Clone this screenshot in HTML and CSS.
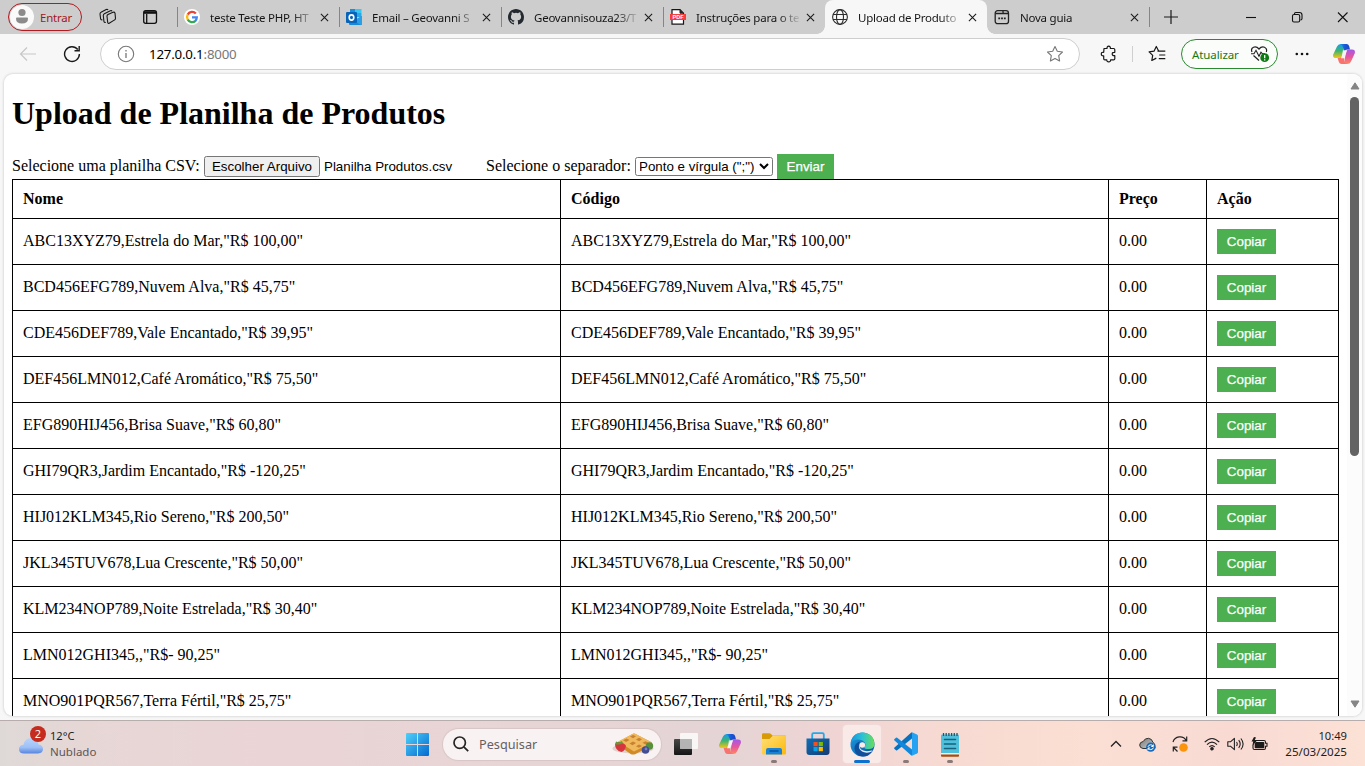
FILE: index.html
```html
<!DOCTYPE html>
<html lang="pt-BR">
<head>
<meta charset="utf-8">
<title>Upload de Produtos</title>
<link rel="stylesheet" href="styles.css">
</head>
<body>
<svg class="defs" aria-hidden="true">
  <defs>
    <linearGradient id="cpTop" x1="0" y1="0" x2="1" y2="0"><stop offset="0" stop-color="#18a0ed"/><stop offset=".55" stop-color="#1a55d6"/><stop offset="1" stop-color="#2044c4"/></linearGradient>
    <linearGradient id="cpLeft" x1="0" y1="0" x2="0" y2="1"><stop offset="0" stop-color="#159cf0"/><stop offset=".5" stop-color="#3fb56c"/><stop offset="1" stop-color="#fbc512"/></linearGradient>
    <linearGradient id="cpRight" x1="0" y1="0" x2="0" y2="1"><stop offset="0" stop-color="#a455ec"/><stop offset=".5" stop-color="#e4569c"/><stop offset="1" stop-color="#ff8a5e"/></linearGradient>
    <linearGradient id="win" gradientUnits="userSpaceOnUse" x1="0" y1="0" x2="23" y2="23"><stop offset="0" stop-color="#4fd0fa"/><stop offset="1" stop-color="#0469cf"/></linearGradient>
    <linearGradient id="folder" x1="0" y1="0" x2="1" y2="1"><stop offset="0" stop-color="#ffe07a"/><stop offset="1" stop-color="#fcb809"/></linearGradient>
    <linearGradient id="edgeTop" x1="0" y1="0" x2="1" y2="0"><stop offset="0" stop-color="#1794dc"/><stop offset=".5" stop-color="#2cc3d4"/><stop offset="1" stop-color="#6bdd55"/></linearGradient>
    <linearGradient id="edgeLow" x1="0" y1="0" x2="1" y2="1"><stop offset="0" stop-color="#1b9de2"/><stop offset="1" stop-color="#0c4f9e"/></linearGradient>
    <linearGradient id="cloud" x1="0" y1="0" x2="0" y2="1"><stop offset="0" stop-color="#b9d4fb"/><stop offset=".6" stop-color="#9dc0f6"/><stop offset="1" stop-color="#5685df"/></linearGradient>
    <linearGradient id="greyCloud" x1="0" y1="0" x2="1" y2="1"><stop offset="0" stop-color="#777"/><stop offset="1" stop-color="#d2d2d2"/></linearGradient>
    <linearGradient id="task" x1="0" y1="0" x2="0" y2="1"><stop offset="0" stop-color="#484848"/><stop offset="1" stop-color="#151515"/></linearGradient>
    <linearGradient id="bag" x1="0" y1="0" x2="1" y2="1"><stop offset="0" stop-color="#0f6fb8"/><stop offset="1" stop-color="#173a70"/></linearGradient>
  </defs>
  <symbol id="close" viewBox="0 0 10 10"><path d="M1 1l8 8M9 1L1 9" stroke="#1b1b1b" stroke-width="1.2" fill="none"/></symbol>
  <symbol id="copilot" viewBox="0 0 22 20">
    <path d="M4 2.600Q5 0 8 0h3L8.600 14H3Q-.6 14 .2 10.500z" fill="url(#cpLeft)"/>
    <path d="M6 0h7.500q2 0 2.600 2l.9 3.500h-2.600q-2 0-2.700 2.200L10.500 6Q10 0 6 0z" fill="url(#cpTop)"/>
    <path d="M18 17.400Q17 20 14 20h-3l2.400-14.500H19q3.600 0 2.800 3.700z" fill="url(#cpRight)"/>
    <path d="M4.600 14h2.200q2 0 2.800-2.400l1.600 2.400Q11 20 15 20H8.500q-2 0-2.600-2z" fill="#f9736e"/>
    <path d="M11.200 6.300h3L11 14.200H8z" fill="#f7f3f3"/>
  </symbol>
</svg>

<header class="tabs">
  <div class="profile"><span class="avatar"><svg width="22" height="22" viewBox="0 0 22 22"><circle cx="11" cy="6.500" r="3.600" fill="#8b8b8b"/><path d="M5 12.700q0-1.200 1-1.200h10q1 0 1 1.200 0 4.800-6 4.800t-6-4.800z" fill="#8b8b8b"/></svg></span><span>Entrar</span></div>
  <svg class="ic-spaces" width="18" height="18" viewBox="0 0 18 18" fill="none" stroke="#191919" stroke-width="1.100" stroke-linejoin="round"><path d="M8 8.300q0-1.200 1-1.700l5-2.300q1.500-.5 2 .8l.5 5.100q0 1.200-.9 1.700l-5.400 3.300q-1.200.5-1.500-.8zM6.800 14.300q-1.600.5-1.900-1L4.300 7.500q0-1.200 1-1.700l6-3q1.200-.5 1.800.4M3.400 11.800q-1.500.3-1.800-1L1 6q0-1.200 1-1.700L7.200 1.500q1.200-.5 1.900.5"/></svg>
  <svg class="ic-side" width="16" height="16" viewBox="0 0 16 16" fill="none" stroke="#111" stroke-width="1.300"><rect x="1.700" y="1.700" width="12.800" height="12.600" rx="2"/><path d="M2 3.500h12" stroke-width="2.600"/><path d="M4.700 5v9"/></svg>
  <div class="tab first">
    <svg class="fav" width="16" height="16" viewBox="0 0 16 16"><circle cx="8" cy="8" r="8" fill="#fff"/><g fill="none" stroke-width="2.300"><path d="M11.800 4.500A5 5 0 0 0 3.700 5.600" stroke="#ea4335"/><path d="M3.700 5.500a5 5 0 0 0 0 5" stroke="#fbbc05"/><path d="M3.700 10.400a5 5 0 0 0 7.800 1.500" stroke="#34a853"/><path d="M8 8.300h4.800q-.1 2.400-1.600 3.800" stroke="#4285f4"/></g></svg>
    <span class="title">teste Teste PHP, HT</span><svg class="x"><use href="#close"/></svg>
  </div>
  <div class="tab">
    <svg class="fav" width="16" height="16" viewBox="0 0 16 16"><path d="M4 0h11v8H4z" fill="#1490df"/><path d="M9 0h6.500v4H9z" fill="#36c7f4"/><path d="M9 4h6.500v4H9z" fill="#28a8ea"/><path d="M3 7l6 4 7-4v8q0 1-1 1H4q-1 0-1-1z" fill="#1988d9"/><path d="M16 7l-8 5 7 4q1 0 1-1z" fill="#2b9fe6"/><rect y="3" width="11" height="11" rx="1" fill="#0864b8"/><ellipse cx="5.500" cy="8.500" rx="2.300" ry="2.600" fill="none" stroke="#fff" stroke-width="1.600"/></svg>
    <span class="title">Email – Geovanni S</span><svg class="x"><use href="#close"/></svg>
  </div>
  <div class="tab">
    <svg class="fav" width="16" height="16" viewBox="0 0 16 16"><path fill="#24292f" d="M8 0C3.580 0 0 3.580 0 8c0 3.540 2.290 6.530 5.470 7.590.4.070.55-.17.55-.38 0-.19-.01-.82-.01-1.490-2.010.37-2.530-.49-2.690-.94-.09-.23-.48-.94-.82-1.130-.28-.15-.68-.52-.01-.53.63-.01 1.080.58 1.230.82.72 1.210 1.870.87 2.330.66.07-.52.28-.87.51-1.070-1.780-.2-3.640-.89-3.640-3.950 0-.87.31-1.590.82-2.150-.08-.2-.36-1.020.08-2.120 0 0 .67-.21 2.200.82a7.600 7.600 0 0 1 4 0c1.530-1.040 2.200-.82 2.200-.82.44 1.100.16 1.920.08 2.120.51.56.82 1.270.82 2.150 0 3.070-1.870 3.750-3.650 3.950.29.25.54.73.54 1.480 0 1.070-.01 1.930-.01 2.200 0 .21.15.46.55.38A8 8 0 0 0 16 8c0-4.420-3.580-8-8-8z"/></svg>
    <span class="title">Geovannisouza23/T</span><svg class="x"><use href="#close"/></svg>
  </div>
  <div class="tab">
    <svg class="fav" width="16" height="16" viewBox="0 0 16 16"><path d="M2 .7h8l3.500 3.500v11H2z" fill="#fff" stroke="#161616" stroke-width="1.200"/><path d="M10 .7v3.500h3.500" fill="#222" stroke="#222"/><path d="M0 5h16v6H0z" fill="#f63d3d"/><text x="8" y="9.900" text-anchor="middle" font-size="5.500" font-weight="700" fill="#fff" font-family="Liberation Sans, sans-serif">PDF</text></svg>
    <span class="title">Instruções para o te</span><svg class="x"><use href="#close"/></svg>
  </div>
  <div class="tab active">
    <svg class="fav" width="16" height="16" viewBox="0 0 16 16" fill="none" stroke="#2c2c2c" stroke-width="1.100"><circle cx="8" cy="8" r="7.400"/><ellipse cx="8" cy="8" rx="3.500" ry="7.400"/><path d="M1 5.500h14M1 10.500h14"/></svg>
    <span class="title">Upload de Produto</span><svg class="x"><use href="#close"/></svg>
  </div>
  <div class="tab last">
    <svg class="fav" width="16" height="16" viewBox="0 0 16 16" fill="none" stroke="#222" stroke-width="1.300"><rect x="1.200" y="1.700" width="13.300" height="13" rx="2.500"/><path d="M1.500 4.500h13M9 2v1q0 1.500 1.500 1.500"/><path d="M4.300 9.300h1.800M7.100 9.300h1.800M9.900 9.300h1.800" stroke-width="1.800"/></svg>
    <span class="title">Nova guia</span><svg class="x"><use href="#close"/></svg>
  </div>
  <span class="tabsep"></span>
  <svg class="ic-plus" width="14" height="14" viewBox="0 0 14 14"><path d="M7 0v14M0 7h14" stroke="#1b1b1b" stroke-width="1.200"/></svg>
  <svg class="winctl" width="118" height="12" viewBox="0 0 118 12" fill="none" stroke="#111" stroke-width="1.100"><path d="M0 6.500h10"/><rect x="46.500" y="3.500" width="7.200" height="7.500" rx="1.500"/><path d="M48.500 3V2.800q0-1.300 1.300-1.300h3.700q2.500 0 2.500 2.500v3.500q0 1.300-1.500 1.500"/><path d="M92 1.500l9.500 9.500M101.500 1.500L92 11"/></svg>
</header>

<nav class="toolbar">
  <svg class="ic-back" width="18" height="16" viewBox="0 0 18 16" fill="none" stroke="#c7c7c7" stroke-width="1.200"><path d="M17 8H1.500M8 1.500L1.500 8 8 14.500"/></svg>
  <svg class="ic-reload" width="18" height="18" viewBox="0 0 18 18" fill="none" stroke="#1b1b1b" stroke-width="1.400"><path d="M14.800 4.500A7.400 7.400 0 1 0 16.400 9M16.200 1v4.700h-4.700"/></svg>
  <div class="address">
    <svg width="18" height="18" viewBox="0 0 18 18" fill="none" stroke="#777" stroke-width="1.100"><circle cx="9" cy="9" r="7.700"/><path d="M9 8v5M9 5v1.500" stroke-width="1.300"/></svg>
    <span class="url">127.0.0.1<b>:8000</b></span>
    <svg class="ic-star" width="18" height="18" viewBox="0 0 18 18" fill="none" stroke="#777" stroke-width="1.100" stroke-linejoin="round"><path d="M9 1.500l2.300 4.800 5.200.7-3.800 3.700.9 5.200L9 13.400l-4.600 2.500.9-5.200L1.500 7l5.200-.7z"/></svg>
  </div>
  <svg class="ic-ext" width="18" height="18" viewBox="0 0 18 18" fill="none" stroke="#161616" stroke-width="1.200" stroke-linejoin="round"><path d="M4 3.500h3q-.2-2.300 1.700-2.300T10.400 3.500h3.200q1.200 0 1.200 1.200v2.600q-2.600-.2-2.600 1.700t2.600 1.700v3q0 1.200-1.200 1.200h-3q.1 2-1.900 2t-1.900-2H4.900q-1.200 0-1.200-1.200v-2.900Q1.300 11 1.300 9t2.400-1.700z"/></svg>
  <span class="sep"></span>
  <svg class="ic-favs" width="18" height="18" viewBox="0 0 18 18" fill="none" stroke="#161616" stroke-width="1.200" stroke-linejoin="round"><path d="M10.500 5.800L8.300 1.500 6 6.200l-4.900.7 3.600 3.500-.9 5.100 4.500-2.400M9.500 6.200h7.800M11.200 10h6.100M10.800 13.700h6.500"/></svg>
  <div class="update"><span>Atualizar</span><svg width="20" height="18" viewBox="0 0 20 18" fill="none"><path d="M2 7Q.5 3.500 3.500 2.200 6.500 1 9 4q2.500-3 5.500-1.800Q17.500 3.500 16.300 7M3.500 10.500L9 15.500" stroke="#222" stroke-width="1.200"/><path d="M1 8.800h3l2-3.500 3 6 2-4 1.500 1.500H15" stroke="#222" stroke-width="1.100"/><circle cx="14.700" cy="12.700" r="4.400" fill="#0d7a12"/><path d="M14.700 10v3.300M14.700 14.300v1.200" stroke="#fff" stroke-width="1.300"/></svg></div>
  <svg class="ic-more" width="14" height="4" viewBox="0 0 14 4" fill="#111"><circle cx="1.800" cy="2" r="1.300"/><circle cx="7" cy="2" r="1.300"/><circle cx="12.200" cy="2" r="1.300"/></svg>
  <svg class="ic-cop" width="22" height="20"><use href="#copilot"/></svg>
</nav>

<div class="frame">
<main class="page">
  <div class="content">
    <h1>Upload de Planilha de Produtos</h1>
    <form class="upload">
      <label class="l-file">Selecione uma planilha CSV:</label>
      <button type="button" class="choose">Escolher Arquivo</button>
      <span class="filename">Planilha Produtos.csv</span>
      <label class="l-sep">Selecione o separador:</label>
      <select><option>Ponto e vírgula (";")</option></select>
      <button type="button" class="green send">Enviar</button>
    </form>
    <table>
      <colgroup><col class="c-wide"><col class="c-wide"><col class="c-price"><col class="c-act"></colgroup>
      <tr><th>Nome</th><th>Código</th><th>Preço</th><th>Ação</th></tr>
      <tr><td>ABC13XYZ79,Estrela do Mar,"R$ 100,00"</td><td>ABC13XYZ79,Estrela do Mar,"R$ 100,00"</td><td>0.00</td><td><button class="green">Copiar</button></td></tr>
      <tr><td>BCD456EFG789,Nuvem Alva,"R$ 45,75"</td><td>BCD456EFG789,Nuvem Alva,"R$ 45,75"</td><td>0.00</td><td><button class="green">Copiar</button></td></tr>
      <tr><td>CDE456DEF789,Vale Encantado,"R$ 39,95"</td><td>CDE456DEF789,Vale Encantado,"R$ 39,95"</td><td>0.00</td><td><button class="green">Copiar</button></td></tr>
      <tr><td>DEF456LMN012,Café Aromático,"R$ 75,50"</td><td>DEF456LMN012,Café Aromático,"R$ 75,50"</td><td>0.00</td><td><button class="green">Copiar</button></td></tr>
      <tr><td>EFG890HIJ456,Brisa Suave,"R$ 60,80"</td><td>EFG890HIJ456,Brisa Suave,"R$ 60,80"</td><td>0.00</td><td><button class="green">Copiar</button></td></tr>
      <tr><td>GHI79QR3,Jardim Encantado,"R$ -120,25"</td><td>GHI79QR3,Jardim Encantado,"R$ -120,25"</td><td>0.00</td><td><button class="green">Copiar</button></td></tr>
      <tr><td>HIJ012KLM345,Rio Sereno,"R$ 200,50"</td><td>HIJ012KLM345,Rio Sereno,"R$ 200,50"</td><td>0.00</td><td><button class="green">Copiar</button></td></tr>
      <tr><td>JKL345TUV678,Lua Crescente,"R$ 50,00"</td><td>JKL345TUV678,Lua Crescente,"R$ 50,00"</td><td>0.00</td><td><button class="green">Copiar</button></td></tr>
      <tr><td>KLM234NOP789,Noite Estrelada,"R$ 30,40"</td><td>KLM234NOP789,Noite Estrelada,"R$ 30,40"</td><td>0.00</td><td><button class="green">Copiar</button></td></tr>
      <tr><td>LMN012GHI345,,"R$- 90,25"</td><td>LMN012GHI345,,"R$- 90,25"</td><td>0.00</td><td><button class="green">Copiar</button></td></tr>
      <tr><td>MNO901PQR567,Terra Fértil,"R$ 25,75"</td><td>MNO901PQR567,Terra Fértil,"R$ 25,75"</td><td>0.00</td><td><button class="green">Copiar</button></td></tr>
    </table>
  </div>
  <div class="scroll">
    <svg width="10" height="8" viewBox="0 0 10 8"><path d="M5 .8L9 7H1z" fill="#858585" stroke="#858585" stroke-linejoin="round"/></svg>
    <span class="thumb"></span>
    <svg class="down" width="10" height="8" viewBox="0 0 10 8"><path d="M5 7.200L9 1H1z" fill="#858585" stroke="#858585" stroke-linejoin="round"/></svg>
  </div>
</main>
</div>

<footer class="taskbar">
  <div class="weather">
    <span class="cloud"><svg width="26" height="18" viewBox="0 0 26 18"><path d="M6 17.500Q1 17.500 1 13q0-4 4.500-4.300Q7 2 13 2t7.500 6.500Q25 9 25 13t-5 4.500z" fill="url(#cloud)"/></svg><span class="badge">2</span></span>
    <span class="wtext"><span>12°C</span><span class="dim">Nublado</span></span>
  </div>
  <svg class="ic-win" width="23" height="23" viewBox="0 0 23 23"><path d="M1 0h10v11H0V1q0-1 1-1zM12 0h10q1 0 1 1v10H12zM0 12h11v11H1q-1 0-1-1zM12 12h11v10q0 1-1 1H12z" fill="url(#win)"/></svg>
  <div class="search">
    <svg width="16" height="16" viewBox="0 0 16 16" fill="none" stroke="#242424" stroke-width="1.700"><circle cx="6.700" cy="6.700" r="5.700"/><path d="M10.800 10.800l4.400 4.400"/></svg>
    <span>Pesquisar</span>
    <svg class="waffle" width="42" height="22" viewBox="0 0 42 22"><ellipse cx="21" cy="15.500" rx="20.500" ry="5" fill="#dfd2cd"/><path d="M6 9L21 .8q1-.5 2 0L40 9.500v3L23 21.200q-2 .8-4 0L6 12z" fill="#d28a25"/><path d="M6 8.500L21 .8q1-.5 2 0L40 9.500 22 18.500z" fill="#f0b95d"/><g fill="#c98231"><path d="M18 3.500l3-1.500 3 1.300-3 2zM24 6.500l3-1.800 3 1.500-3 2zM11 7.300l3.500-1.800 3 1.500-3.500 2zM17.500 10.500l3.500-2 3 1.500-3.500 2.200zM30.500 9.800l3-1.500 3 1.400-3 1.800zM24 13.300l3-1.800 3 1.500-3.200 1.800z"/></g><path d="M3 11q2-2.500 6-1.500t5 3.500q-1 5-4.500 6Q3 17.500 3 11z" fill="#d8343d"/><path d="M3 11.500l1-3 3 1 3-1.500 1 2.500-4 1z" fill="#5f9c3b"/><circle cx="37.500" cy="13" r="3.700" fill="#56903a"/><circle cx="33.500" cy="17" r="3.800" fill="#434e91"/><circle cx="34" cy="16" r="1.400" fill="#7681c0"/></svg>
  </div>
  <div class="apps">
    <span class="app"><svg width="26" height="24" viewBox="0 0 26 24"><rect x="1" y="7" width="18" height="16" rx="1" fill="url(#task)"/><rect x="7" y="1" width="18" height="16" rx="1" fill="#fff" opacity=".78"/><path d="M7 7h12v10H7z" fill="#aaa" opacity=".75"/></svg></span>
    <span class="app"><svg width="22" height="20"><use href="#copilot"/></svg></span>
    <span class="app run"><svg width="24" height="22" viewBox="0 0 24 22"><path d="M0 1.500Q0 .2 1.300.2h6q1 0 1.700.8l1.400 1.600H23q1 0 1 1V6H0z" fill="#d99a08"/><path d="M0 6h7.500L11 2.500h12q1 0 1 1v17q0 1-1 1H1q-1 0-1-1z" fill="url(#folder)"/><path d="M4 21.500V17q0-2 2-2h12q2 0 2 2v4.500z" fill="#1683d8"/><path d="M8 18h8" stroke="#0a529d" stroke-width="1.500" stroke-linecap="round"/></svg></span>
    <span class="app"><svg width="24" height="24" viewBox="0 0 24 24"><path d="M6.200 7V2.500q0-1.300 1.300-1.300h9q1.300 0 1.300 1.300V7" fill="none" stroke="#22a9e8" stroke-width="1.800"/><path d="M.5 6.500h23V20q0 3-3 3h-17q-3 0-3-3z" fill="url(#bag)"/><path d="M7.500 10h4.200v4.200H7.500z" fill="#f25022"/><path d="M12.700 10h4.200v4.200h-4.200z" fill="#7fba00"/><path d="M7.500 15h4.200v4.200H7.500z" fill="#00a4ef"/><path d="M12.700 15h4.200v4.200h-4.200z" fill="#ffb900"/></svg></span>
    <span class="app on"><svg width="25" height="25" viewBox="0 0 25 25"><circle cx="12.500" cy="12.500" r="12" fill="url(#edgeLow)"/><path d="M.7 11.500Q2 .5 13 .5q10 .5 11.500 11 0 5.500-6 5.500-5 0-4.200-2.300 2-2.200.3-4.500Q12.500 7.500 8.500 7.500 3 7.500.7 11.500z" fill="url(#edgeTop)"/><path d="M10 9.500Q7 15 11 19q4.500 4 11.500 0-4 6-10 5.500-7.500-1-8-8Q4.500 11 10 9.500z" fill="#0f4f9c"/><path d="M10.300 11.500q-1.800 4 1.200 6.300 4.200 2.500 10 .7l1.200.5q-5.500 3-10.500.5Q7 16 10.300 11.500z" fill="#fbeae7"/><circle cx="12.300" cy="13" r="2.800" fill="#fbeae7"/></svg></span>
    <span class="app run"><svg width="24" height="24" viewBox="0 0 24 24"><path d="M18 .2l5 2.300q1 .5 1 1.500v16q0 1-1 1.500l-5 2.300z" fill="#26a2f2"/><path d="M18 .2v6.300L3.200 18.300q-.6.400-1.200 0L.5 17q-.8-.7 0-1.400L17 .8z" fill="#0872c0"/><path d="M18 23.800v-6.300L3.200 5.700Q2.600 5.300 2 5.700L.5 7q-.8.700 0 1.400L17 23.200z" fill="#1288dc"/></svg></span>
    <span class="app run"><svg width="20" height="25" viewBox="0 0 20 25"><path d="M1 20h18v4q0 .8-1 .8H2q-1 0-1-.8z" fill="#a84d10"/><path d="M1 21h18v1.500H1z" fill="#f4eee9"/><path d="M1 3.500q0-1 1-1h16q1 0 1 1V21H1z" fill="#4fc0dc"/><path d="M3.500 1v3M6.200 1v3M8.900 1v3M11.600 1v3M14.300 1v3M17 1v3" stroke="#175a72" stroke-width="1.300"/><path d="M4.500 7.500h11M4.500 12h11M4.500 16.500h11" stroke="#16617c" stroke-width="1.600" stroke-linecap="round"/></svg></span>
  </div>
  <div class="tray">
    <svg class="i-up" width="12" height="8" viewBox="0 0 12 8" fill="none" stroke="#222" stroke-width="1.300"><path d="M1 6.500l5-5 5 5"/></svg>
    <svg class="i-one" width="17" height="15" viewBox="0 0 17 15"><path d="M4 11.500Q.7 11 .7 8t3.500-3.500Q6 1 9.500 1.300T14 5.500q2 1 2 3v3z" fill="url(#greyCloud)" stroke="#333"/><circle cx="11.700" cy="10.200" r="4.600" fill="#1669bb"/><path d="M9 9.800q.5-2 2.700-2 1.500 0 2.300 1.300M14.400 10.600q-.5 2-2.700 2-1.500 0-2.300-1.300M14.300 7.500v2h-2M9.100 13v-2h2" fill="none" stroke="#fff"/></svg>
    <svg class="i-sync" width="18" height="18" viewBox="0 0 18 18" fill="none" stroke="#242424" stroke-width="1.200"><path d="M2 7A7.300 7.300 0 0 1 15.300 5.500M15.700 1.500v4.300h-4.200M6.500 16.500l-4-4M2.300 16.500v-4.300h4.200"/><circle cx="12.500" cy="12.500" r="4.300" fill="#fb940b" stroke="none"/></svg>
    <svg class="i-wifi" width="16" height="14" viewBox="0 0 16 14" fill="none" stroke="#222" stroke-width="1.200"><path d="M.7 5.200q7.300-7.400 14.600 0M3 7.600q5-5 10 0M5.300 9.900q2.700-2.600 5.400 0"/><circle cx="8" cy="11.700" r="1.200" fill="#222"/></svg>
    <svg class="i-vol" width="17" height="14" viewBox="0 0 17 14" fill="none" stroke="#222" stroke-width="1.100" stroke-linejoin="round"><path d="M.8 4.800h2.600l4-3.500v11.400l-4-3.500H.8zM9.500 5q1.500 2 0 4M11.700 3.200q3 3.800 0 7.600M13.900 1.500q4.400 5.500 0 11"/></svg>
    <svg class="i-bat" width="17" height="14" viewBox="0 0 17 14"><path d="M3 3.500h10q1.500 0 1.500 1.500v1.200H16v3h-1.500V11q0 1.500-1.500 1.500H3.500Q2 12.500 2 11V8z" fill="none" stroke="#1b1b1b" stroke-width="1.100"/><path d="M4.500 5h8q.8 0 .8.800v4.600q0 .8-.8.800h-8q-.8 0-.8-.8V7z" fill="#1b1b1b"/><path d="M3 0L.5 4.500H3L1.800 8.500 6 3.500H3.500L5 .5z" fill="#1b1b1b"/></svg>
    <div class="clock"><span>10:49</span><span class="date">25/03/2025</span></div>
  </div>
</footer>
</body>
</html>
```

FILE: styles.css
```css
* { box-sizing: border-box; }
html, body { height: 100%; }
body {
  margin: 0;
  display: flex;
  flex-direction: column;
  overflow: hidden;
  background: #f7f7f7;
  color: #000;
  font-family: "Noto Sans", sans-serif;
  font-size: 11.5px;
}
svg { display: block; flex: none; }
.defs { position: absolute; width: 0; height: 0; }

/* Tab strip */
.tabs { display: flex; align-items: center; height: 34px; flex: none; background: #cdcdcd; color: #151515; }
.profile {
  display: flex; align-items: center; gap: 6px;
  width: 74px; height: 28px; margin-left: 8px;
  border: 1px solid #b3191f; border-radius: 14px;
  color: #a4161a; white-space: nowrap;
  font-size: 11.4px; letter-spacing: -.15px;
}
.avatar { width: 24px; height: 24px; border-radius: 50%; background: #fafafa; display: grid; place-items: center; flex: none; margin-left: 1px; }
.ic-spaces { margin-left: 17px; }
.ic-side { margin-left: 25px; }
.tab { position: relative; display: flex; align-items: center; width: 162px; height: 34px; padding-left: 7px; flex: none; }
.tab::before { content: ""; width: 1px; height: 20px; background: #858585; margin-left: -7px; margin-right: 6px; flex: none; }
.tab.first { margin-left: 19px; }
.title {
  flex: none; width: 103px; margin-left: 10px; white-space: nowrap; letter-spacing: -.24px;
  -webkit-mask-image: linear-gradient(90deg, #000 80%, rgba(0, 0, 0, .1) 100%);
  mask-image: linear-gradient(90deg, #000 80%, rgba(0, 0, 0, .1) 100%);
}
.x { width: 9px; height: 9px; margin-left: 7px; }
.active { background: #f7f7f7; border-radius: 8px 8px 0 0; z-index: 1; }
.active::before { background: none; }
.active::after {
  content: ""; position: absolute; left: -8px; right: -8px; bottom: 0; height: 8px; pointer-events: none;
  background:
    radial-gradient(circle at 0 0, transparent 7.5px, #f7f7f7 8px) left / 8px 8px no-repeat,
    radial-gradient(circle at 100% 0, transparent 7.5px, #f7f7f7 8px) right / 8px 8px no-repeat;
}
.last::before { background: none; }
.tabsep { width: 1px; height: 20px; background: #858585; }
.ic-plus { margin-left: 14px; }
.winctl { margin-left: auto; margin-right: 1px; }

/* Navigation toolbar */
.toolbar { display: flex; align-items: center; height: 40px; flex: none; background: #f7f7f7; }
.ic-back { margin-left: 19px; }
.ic-reload { margin-left: 26px; }
.address {
  display: flex; align-items: center; width: 980px; height: 32px; margin-left: 19px; padding: 0 15px 0 16px;
  border: 1px solid #cecece; border-radius: 16px; background: #fff; flex: none;
}
.url { margin-left: 14px; font-size: 13.3px; letter-spacing: -.2px; }
.url b { font-weight: 400; color: #777; }
.ic-star { margin-left: auto; }
.ic-ext { margin-left: 20px; }
.sep { width: 1px; height: 16px; margin-left: 14px; background: #cfcfcf; }
.ic-favs { margin-left: 15px; }
.update {
  display: flex; align-items: center; gap: 11px; width: 97px; height: 30px; margin-left: 15px; padding-left: 10px;
  border: 1px solid #2b8a30; border-radius: 15px; color: #137a18; background: #fbfdfb; white-space: nowrap;
  font-size: 11.5px; letter-spacing: -.1px;
}
.ic-more { margin-left: 17px; }
.ic-cop { margin-left: 24px; }

/* Web page viewport */
.frame { flex: none; height: 646px; padding: 0 3px 4px 4px; }
.page {
  display: flex; height: 642px; overflow: hidden; background: #fff; border-radius: 9px;
  box-shadow: 0 0 2px 1px #ddd;
  font-family: "Liberation Serif", "Times New Roman", serif; font-size: 16px;
}
.content { width: 1343px; padding-left: 8px; flex: none; }
h1 { margin: 21px 0; height: 38px; line-height: 37px; font-size: 32px; }
.upload { display: flex; align-items: center; height: 25px; margin: 0; white-space: nowrap; }
.upload label { flex: none; padding-bottom: 1px; }
.l-file { width: 192px; }
.l-sep { width: 149px; }
.choose {
  width: 116px; height: 21px; padding: 0; border: 1px solid #767676; border-radius: 2.5px; background: #efefef;
  font: 13.333px "Liberation Sans", Arial, sans-serif; color: #000;
}
.filename { width: 162px; margin-left: 4px; font: 13.333px "Liberation Sans", Arial, sans-serif; }
select {
  width: 138px; height: 19px; margin: 0 4px 0 0; padding: 0; border: 1px solid #767676; border-radius: 2.5px;
  background-color: #fff; color: #000; font: 13.333px "Liberation Sans", Arial, sans-serif; text-indent: -1px;
}
.green {
  display: block; height: 25px; width: 59px; padding: 0; border: 0; background: #4caf50; color: #fff;
  font: 13.333px "Liberation Sans", Arial, sans-serif; -webkit-text-stroke: .25px #fff;
}
.send { width: 57px; }
table { width: 1327px; table-layout: fixed; border-collapse: collapse; }
.c-wide { width: 548px; }
.c-price { width: 98px; }
.c-act { width: 132px; }
th, td { border: 1px solid #000; padding: 0 10px 1px; height: 46px; text-align: left; line-height: 18px; white-space: nowrap; }
td:last-child { padding-bottom: 0; }
th { height: 39px; padding-bottom: 0; }
.scroll { flex: 1; display: flex; flex-direction: column; align-items: center; padding: 8px 0; background: #fcfcfc; }
.thumb { width: 9px; height: 359px; margin-top: 7px; border-radius: 5px; background: #636363; }
.down { margin-top: auto; }

/* Desktop taskbar */
.taskbar {
  display: flex; align-items: center; height: 46px; flex: none; border-top: 1px solid #b7adac;
  background: linear-gradient(90deg, #ded9d7 0, #e6d7d5 6%, #ebd4d5 20%, #e7d5d5 38%, #e5d4d5 53%, #f0d4d4 61%, #f7dbd2 70%, #fbdfd3 80%, #f8dad3 90%, #fce1d5 100%);
  color: #1d1d1d; font-size: 11.1px;
}
.weather { display: flex; align-items: center; width: 387px; padding-left: 18px; flex: none; }
.cloud { position: relative; padding-top: 2px; }
.badge {
  position: absolute; left: 12px; top: -8px; width: 16px; height: 16px; border-radius: 50%;
  background: #c52b1e; color: #fff; text-align: center; font-size: 11px; line-height: 16px;
}
.wtext { display: flex; flex-direction: column; margin-left: 6px; line-height: 16px; }
.dim { color: #5d5555; font-size: 11.5px; }
.ic-win { margin-left: 19px; margin-top: 2px; }
.search {
  display: flex; align-items: center; width: 218px; height: 31px; margin: 1px 0 0 14px; padding: 0 7px 0 10px;
  border-radius: 16px; background: #f9f2f2; box-shadow: 0 0 1px 1px #d8c6c6; flex: none;
}
.search span { margin-left: 10px; font-size: 12.7px; color: #655f5f; }
.waffle { margin-left: auto; }
.apps { display: flex; margin-left: 3px; }
.app { position: relative; display: grid; place-items: center; width: 38px; height: 38px; margin: 1px 3px 0; border-radius: 4px; }
.app.on { background: #faeae7; box-shadow: 0 0 1px 1px #eedbd9; }
.run::after, .on::after {
  content: ""; position: absolute; left: 16px; bottom: 0; width: 6px; height: 3px; border-radius: 2px; background: #8a7a77;
}
.on::after { left: 11px; width: 16px; background: #0b72cf; }
.tray { display: flex; align-items: center; margin-left: auto; padding-right: 18px; padding-top: 1px; }
.i-one { margin-left: 17px; }
.i-sync { margin-left: 15px; }
.i-wifi { margin-left: 15px; }
.i-vol { margin-left: 7px; }
.i-bat { margin-left: 7px; }
.clock { display: flex; flex-direction: column; width: 79px; text-align: right; line-height: 16px; margin-top: -1px; font-size: 11.2px; }
.date { font-size: 11.6px; }
```
